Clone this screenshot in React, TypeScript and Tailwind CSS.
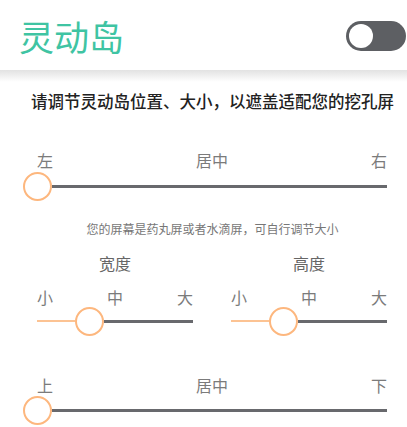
const font = { fontFamily: '"Noto Sans CJK SC", "Noto Sans", sans-serif' };

function Thumb() {
  return <div className="w-[29px] h-[29px] shrink-0 rounded-full border-2 border-[#fdb77e] bg-white" />;
}

function LabelRow({ items, className }: { items: string[]; className: string }) {
  return (
    <div className={`flex justify-between items-center text-[16px] text-[#7b7b7b] leading-none ${className}`}>
      {items.map((t) => (
        <span key={t}>{t}</span>
      ))}
    </div>
  );
}

function SizeSlider({ title }: { title: string }) {
  return (
    <div className="flex flex-col w-[156px]">
      <div className="h-[24px] mt-[11px] flex items-center justify-center text-[16px] text-[#666] leading-none">
        {title}
      </div>
      <LabelRow items={["小", "中", "大"]} className="h-[22px] mt-[11px] text-[15px]" />
      <div className="h-[26px] flex items-center">
        <div className="w-[38px] h-[2px] bg-[#fcc393]" />
        <Thumb />
        <div className="flex-1 h-[3px] bg-[#68696d]" />
      </div>
    </div>
  );
}

export default function App() {
  return (
    <div className="w-[407px] h-[427px] bg-white overflow-hidden flex flex-col" style={font}>
      {/* Header */}
      <div className="h-[70px] flex items-center justify-between">
        <span className="ml-[19px] text-[35px] leading-none text-[#3fc4a3]">灵动岛</span>
        <div className="w-[60px] h-[30px] mr-[1px] mt-[2px] rounded-full bg-[#5d5f63] flex items-center pl-[3px]">
          <div className="w-[24px] h-[24px] rounded-full bg-white" />
        </div>
      </div>
      <div className="h-[12px] bg-gradient-to-b from-[#e2e2e2] to-white" />

      <div className="h-[38px] flex items-center justify-center pl-[18px] text-[16.5px] font-medium text-[#222] leading-none">
        请调节灵动岛位置、大小，以遮盖适配您的挖孔屏
      </div>

      {/* Horizontal position */}
      <LabelRow items={["左", "居中", "右"]} className="h-[24px] mt-[28px] pl-[37px] pr-[20px]" />
      <div className="h-[28px] flex items-center pl-[23px] pr-[20px]">
        <Thumb />
        <div className="flex-1 h-[3px] bg-[#68696d]" />
      </div>

      <div className="h-[22px] mt-[18px] flex items-center justify-center pl-[18px] text-[12px] text-[#777] leading-none">
        您的屏幕是药丸屏或者水滴屏，可自行调节大小
      </div>

      {/* Size */}
      <div className="flex gap-[38px] pl-[37px]">
        <SizeSlider title="宽度" />
        <SizeSlider title="高度" />
      </div>

      {/* Vertical position */}
      <LabelRow items={["上", "居中", "下"]} className="h-[24px] mt-[39px] pl-[37px] pr-[20px]" />
      <div className="h-[26px] flex items-center pl-[23px] pr-[20px]">
        <Thumb />
        <div className="flex-1 h-[3px] bg-[#68696d]" />
      </div>
    </div>
  );
}
